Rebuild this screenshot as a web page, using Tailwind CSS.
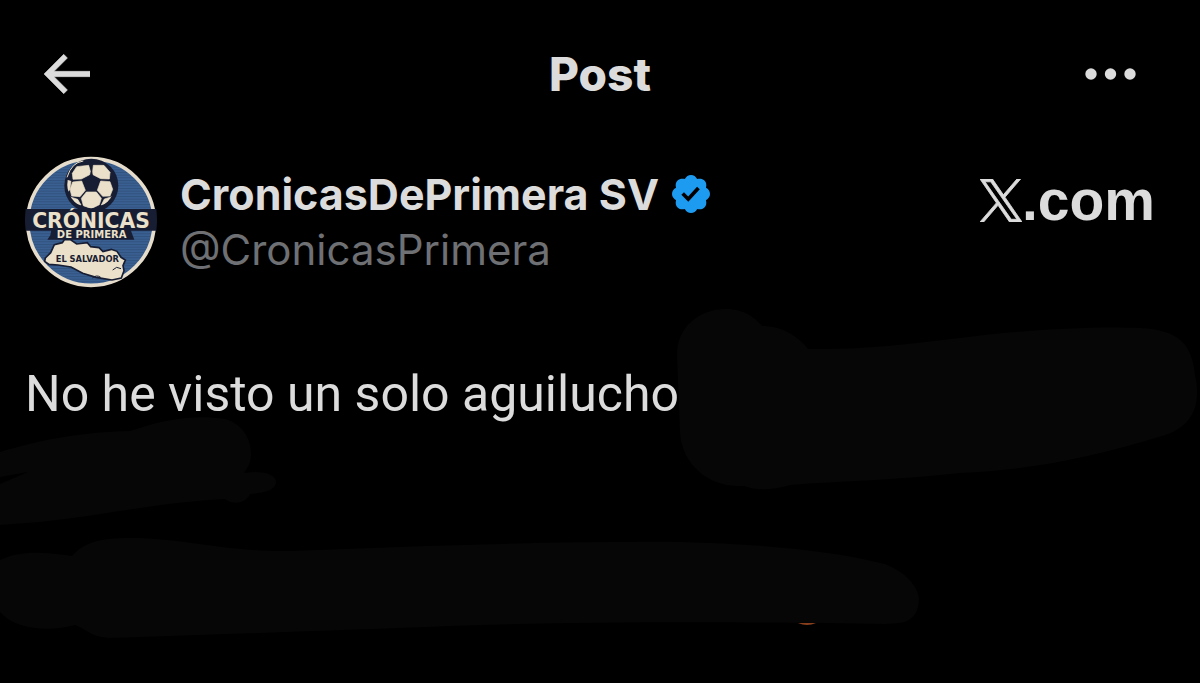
<!DOCTYPE html>
<html lang="es">
	<head>
		<meta charset="utf-8">
		<meta name="viewport" content="width=device-width, initial-scale=1">
		<title>Post</title>
		<script src="https://cdn.jsdelivr.net/npm/@tailwindcss/browser@4"></script>
	</head>

	<body class="bg-black">
		<div class="relative w-full min-h-screen overflow-hidden bg-black text-[#dcdcdc] font-['Inter',sans-serif]">

			<!-- marker strokes -->
			<svg class="absolute top-0 left-0 w-full" viewBox="0 0 1200 683" fill="#060606" aria-hidden="true">
				<path d="M677 355C677 328 698 309 726 309C742 309 754 316 762 326C782 326 798 336 808 349C860 350 910 344 960 338C1020 330 1090 326 1140 328C1180 330 1192 345 1195 375C1202 405 1192 428 1162 436C1090 458 1030 470 960 473C900 480 840 481 790 485C770 491 755 490 744 486C710 488 682 466 680 432Z"/>
				<path d="M0 452C40 440 80 432 130 431C170 417 200 415 225 419C246 425 254 445 250 462C247 470 244 472 244 473C262 470 276 474 276 482C276 491 262 493 250 494C246 504 232 505 225 499C160 502 100 516 40 522L0 525V484L28 472L0 477Z"/>
				<path d="M0 560C20 550 45 552 72 556C84 542 100 537 140 538C190 540 230 552 290 551C420 546 560 541 680 542C760 544 830 550 885 564C910 574 919 590 919 600C917 625 900 623 885 624C760 622 600 621 450 626C350 630 230 634 110 638C90 637 85 628 75 625C50 632 15 630 0 612Z"/>
				<path fill="#8a3f1c" d="M798 623H816Q807 627 798 623Z"/>
			</svg>

			<header class="relative grid grid-cols-[1fr_auto_1fr] items-center px-11 pt-11">
				<button class="justify-self-start" aria-label="Back">
					<svg class="w-[46px] h-10" viewBox="3.586 4.54 17.414 14.92" fill="currentColor" stroke="currentColor" stroke-width=".2"><path d="M7.414 13l5.043 5.04-1.414 1.42L3.586 12l7.457-7.46 1.414 1.42L7.414 11H21v2H7.414z"/></svg>
				</button>
				<h1 class="text-[46px] leading-[60px] font-extrabold">Post</h1>
				<button class="justify-self-end mr-5" aria-label="More">
					<svg class="w-[51px] h-3" viewBox="0 0 51 12" fill="currentColor"><circle cx="6" cy="6" r="5.7"/><circle cx="25.500" cy="6" r="5.7"/><circle cx="45" cy="6" r="5.7"/></svg>
				</button>
			</header>

			<main class="relative px-[25px] pt-[52px]">
				<div class="flex items-start">
					<svg class="w-[132px] h-[132px] shrink-0" viewBox="15 16 396 396" role="img" aria-label="Crónicas de Primera">
						<defs>
							<pattern id="lines" width="8" height="8" patternUnits="userSpaceOnUse">
								<rect width="8" height="8" fill="#3a6092"/>
								<rect width="8" height="3" fill="#30527f"/>
							</pattern>
							<clipPath id="ball"><circle cx="213" cy="102" r="71"/></clipPath>
						</defs>
						<circle cx="213" cy="214" r="190" fill="url(#lines)" stroke="#e6dccb" stroke-width="11"/>
						<circle cx="214" cy="105" r="81" fill="#171d33"/>
						<g clip-path="url(#ball)" fill="#ebe0c9" stroke="#ebe0c9" stroke-width="2" stroke-linejoin="round">
							<path d="M170 48L206 44L211 62L209 72L184 85L159 86L157 68Z"/>
							<path d="M220 44L252 44L270 65L268 85L242 84L219 72L218 62Z"/>
							<path d="M140 88L153 92L149 118L142 124Z"/>
							<path d="M158 94L185 91L196 119L180 138L155 136L150 116Z"/>
							<path d="M242 91L270 93L278 116L270 136L248 137L232 119Z"/>
							<path d="M199 124H229L244 143L238 162L214 174L190 165L184 143Z"/>
							<path d="M148 138L173 146L183 163Q160 158 148 138Z"/>
							<path d="M253 145L276 138Q265 158 244 163Z"/>
						</g>
						<path d="M191 92L214 77L237 92L228 118H200Z" fill="#171d33"/>
						<path d="M141 80Q155 35 190 31" fill="none" stroke="#ebe0c9" stroke-width="3"/>
						<path d="M17 175H409Q413 207 409 240H17Q13 207 17 175Z" fill="#171d33"/>
						<path d="M94 238H332L343 267H82L91 254Z" fill="#171d33"/>
						<path d="M76 322L92 306L103 282L127 276L134 266L151 267L170 280L202 276L212 288L237 291L249 303L274 296L291 302L303 320L316 328L309 345L312 360L304 382L276 388L228 380L188 368L153 349L114 343L87 341L74 332Z" fill="#ebe0c9" stroke="#171d33" stroke-width="5"/>
						<path d="M217 382Q230 371 242 380M278 358L290 350L303 354" fill="none" stroke="#171d33" stroke-width="3"/>
						<text x="213" y="232" text-anchor="middle" fill="#ebe0c9" class="text-[61px] font-bold font-['DejaVu_Sans',sans-serif]">CRÓNICAS</text>
						<text x="215" y="262" text-anchor="middle" fill="#ebe0c9" class="text-[30px] font-bold font-['DejaVu_Sans',sans-serif]">DE PRIMERA</text>
						<text x="202" y="333" text-anchor="middle" fill="#171d33" class="text-[25px] font-bold font-['DejaVu_Sans',sans-serif]">EL SALVADOR</text>
					</svg>
					<div class="ml-[23px] pt-3">
						<div class="flex items-center gap-[13px]">
							<h2 class="text-[43px] leading-[52px] font-bold">CronicasDePrimera SV</h2>
							<svg class="w-[38px] h-[38px]" viewBox="1.75 1.75 20.5 20.5" fill="#1d9bf0" role="img" aria-label="Verified account"><path d="M22.25 12c0-1.43-.88-2.67-2.19-3.34.46-1.39.2-2.9-.81-3.91s-2.52-1.27-3.91-.81c-.66-1.31-1.91-2.19-3.34-2.19s-2.67.88-3.33 2.19c-1.4-.46-2.91-.2-3.92.81s-1.26 2.52-.8 3.91c-1.31.67-2.2 1.91-2.2 3.34s.89 2.67 2.2 3.34c-.46 1.39-.21 2.9.8 3.91s2.52 1.26 3.91.81c.67 1.31 1.91 2.19 3.34 2.19s2.68-.88 3.34-2.19c1.39.45 2.9.2 3.91-.81s1.27-2.52.81-3.91c1.31-.67 2.19-1.91 2.19-3.34zm-11.71 4.2L6.8 12.46l1.41-1.42 2.26 2.26 4.8-5.23 1.47 1.36-6.2 6.77z"/></svg>
						</div>
						<p class="text-[42px] leading-[60px] text-[#6e7074]">@CronicasPrimera</p>
					</div>
					<a href="#" class="ml-auto mr-5 mt-3 flex items-center" aria-label="X.com">
						<svg class="w-[42px] h-[43px]" viewBox="0 0 1200 1227" fill="currentColor" stroke="currentColor" stroke-width="24"><path d="M714.163 519.284L1160.89 0H1055.03L667.137 450.887L357.328 0H0L468.492 681.821L0 1226.37H105.866L515.491 750.218L842.672 1226.37H1200L714.137 519.284H714.163ZM569.165 687.828L521.697 619.934L144.011 79.6944H306.615L611.412 515.685L658.88 583.579L1055.08 1150.3H892.476L569.165 687.854V687.828Z"/></svg>
						<span class="text-[57px] leading-[64px] font-bold font-['Liberation_Sans',sans-serif]">.com</span>
					</a>
				</div>

				<p class="mt-[74px] text-[50px] leading-[64px] font-['Roboto',sans-serif]">No he visto un solo aguilucho</p>
			</main>
		</div>
	</body>
</html>
